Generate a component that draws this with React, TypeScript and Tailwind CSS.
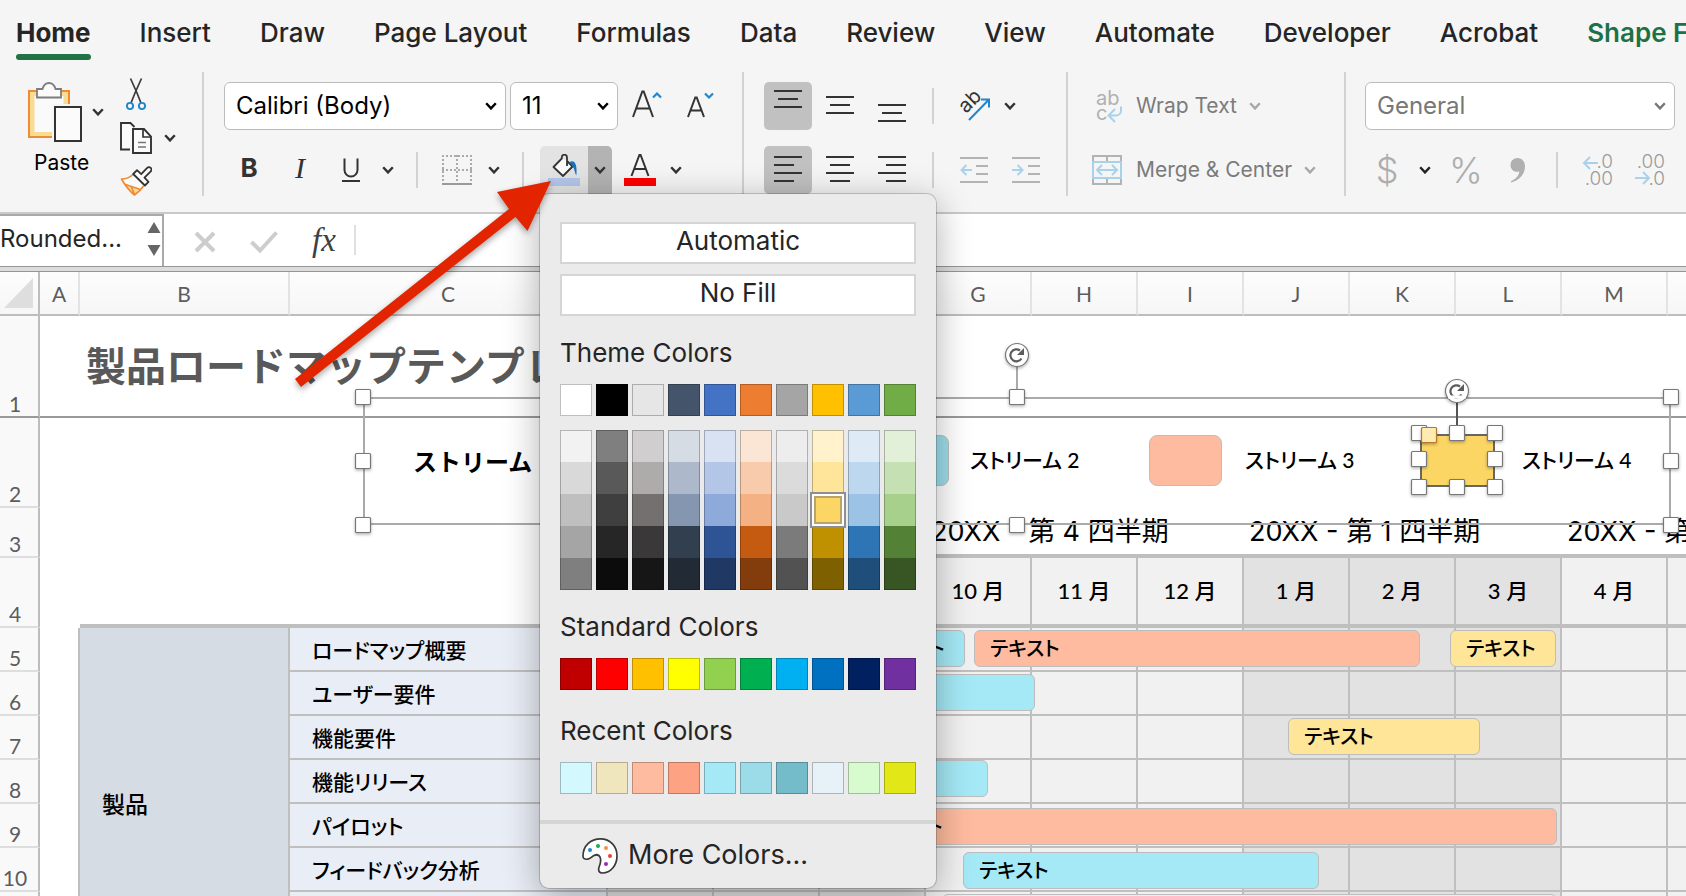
import React from "react";

const SANS = "font-['Inter','Noto_Sans_CJK_JP',sans-serif]";
const SHEET = "font-['Lato','Noto_Sans_CJK_JP',sans-serif]";

function Chevron({ className = "text-[#333]" }: { className?: string }) {
  return (
    <svg width="12" height="8" viewBox="0 0 12 8" fill="none" className={"shrink-0 " + className} aria-hidden="true">
      <path d="M1.2 1.2 6 6.4 10.8 1.2" stroke="currentColor" strokeWidth="2.4" />
    </svg>
  );
}

function Separator() {
  return <div className="h-[124px] w-0.5 shrink-0 bg-[#d2d2d2]" />;
}

function SmallSeparator({ className }: { className: string }) {
  return <div className={"h-9 w-0.5 shrink-0 bg-[#d2d2d2] " + className} />;
}

const tabs = ["Home", "Insert", "Draw", "Page Layout", "Formulas", "Data", "Review", "View", "Automate", "Developer", "Acrobat", "Shape Format"];

function Tabs() {
  return (
    <nav className="flex h-[68px] gap-[49px] overflow-hidden pl-4 text-[26px] leading-[30px] font-medium text-[#252525]">
      {tabs.map((t, i) => (
        <button
          key={t}
          type="button"
          className={
            "flex shrink-0 flex-col pt-[18px] whitespace-nowrap " +
            (i === 0 ? "font-bold" : i === tabs.length - 1 ? "font-semibold text-[#1e7145]" : "")
          }
        >
          {t}
          {i === 0 && <span className="mt-1.5 h-1.5 w-full rounded-full bg-[#217346]" />}
        </button>
      ))}
    </nav>
  );
}

function ClipboardGroup() {
  return (
    <div className="flex w-[202px] shrink-0 pt-1.5 pl-7">
      <button type="button" className="flex w-[92px] flex-col items-start pt-1">
        <span className="flex items-center gap-2.5">
          <svg width="54" height="60" viewBox="0 0 54 60" fill="none">
            <path d="M1 9H41V55H1z" fill="#f9dc93" />
            <path d="M6.500 14H35.500V50H6.500z" fill="#fafafa" />
            <path d="M24 22h20v37H24z" fill="#f6f6f6" />
            <path d="M24 55H1V9H41V22" stroke="#ee8b35" strokeWidth="2" />
            <path d="M9 15.500V7h5.500C15.500 3.500 18 1 21 1s5.500 2.500 6.500 6H33v8.500z" fill="#fafafa" stroke="#7d7d7d" strokeWidth="1.800" />
            <path d="M27 25h26v34H27z" fill="#fbfbfb" stroke="#333" strokeWidth="2" />
          </svg>
          <Chevron />
        </span>
        <span className="mt-[7px] pl-1.5 text-[21px] leading-7 text-black">Paste</span>
      </button>
      <div className="flex flex-col items-start gap-3">
        <button type="button" aria-label="Cut" className="pl-1.5">
          <svg width="20" height="32" viewBox="0 0 20 32" fill="none">
            <path d="M4.500 .5 10.800 14.500 15 25M15.500 .5 9.200 14.500 5 25" stroke="#3a3a3a" strokeWidth="1.700" />
            <circle cx="4" cy="28" r="3.100" stroke="#1f86d0" strokeWidth="1.900" />
            <circle cx="16" cy="28" r="3.100" stroke="#1f86d0" strokeWidth="1.900" />
          </svg>
        </button>
        <button type="button" aria-label="Copy" className="flex items-center gap-3">
          <svg width="32" height="32" viewBox="0 0 32 32" fill="none">
            <path d="M10 27.500H1V1h9.500l4 4" fill="#fafafa" stroke="#333" strokeWidth="1.900" />
            <path d="M13 7h11l7 7.500V31H13z" fill="#fbfbfb" stroke="#333" strokeWidth="1.900" />
            <path d="M23 7v8H31" stroke="#333" strokeWidth="1.700" />
            <path d="M18 20.500h8M18 25h8" stroke="#777" strokeWidth="1.600" />
          </svg>
          <Chevron />
        </button>
        <button type="button" aria-label="Format painter">
          <svg width="32" height="32" viewBox="0 0 32 32" fill="none">
            <path d="M1.500 13C6 13 10 11 13.200 7.500L25 19C22 22.500 19 26 14.500 29 9.500 25 5 19 1.500 13z" fill="#fbfbfb" />
            <path d="M6.500 19.500 20 23 14.500 28.500z" fill="#f9dc93" />
            <path d="M13 8.500C10 11.500 6 13 1.500 13 5 19 9.500 25 14.500 29 18 26.500 21 24 23.500 20M5.500 18.500 20.500 23.500M14.500 28.500 11.500 21" stroke="#ee8b35" strokeWidth="1.700" strokeLinejoin="round" />
            <path d="M13.200 8 17 4.200l4.200 4 6-6.400a2.400 2.400 0 0 1 3.500 3.500L24.500 11.700l4 4.100-3.600 3.700z" fill="#fbfbfb" stroke="#333" strokeWidth="1.800" strokeLinejoin="round" />
          </svg>
        </button>
      </div>
    </div>
  );
}

const THEME = ["#ffffff", "#000000", "#e7e6e6", "#44546a", "#4472c4", "#ed7d31", "#a5a5a5", "#ffc000", "#5b9bd5", "#70ad47"];
const TINTS = [
  ["#f2f2f2", "#d9d9d9", "#bfbfbf", "#a5a5a5", "#7f7f7f"],
  ["#7f7f7f", "#595959", "#3f3f3f", "#262626", "#0c0c0c"],
  ["#d0cece", "#aeabab", "#757070", "#3a3838", "#171616"],
  ["#d6dce4", "#adb9ca", "#8496b0", "#323f4f", "#222a35"],
  ["#d9e2f3", "#b4c6e7", "#8eaadb", "#2f5496", "#1f3864"],
  ["#fbe5d5", "#f7cbac", "#f4b183", "#c55a11", "#833c0b"],
  ["#ededed", "#dbdbdb", "#c9c9c9", "#7b7b7b", "#525252"],
  ["#fff2cc", "#fee599", "#fcd664", "#bf9000", "#7f6000"],
  ["#deebf6", "#bdd7ee", "#9cc3e5", "#2e75b5", "#1e4e79"],
  ["#e2efd9", "#c5e0b3", "#a8d08d", "#538135", "#375623"],
];
const STANDARD = ["#c00000", "#ff0000", "#ffc000", "#ffff00", "#92d050", "#00b050", "#00b0f0", "#0070c0", "#002060", "#7030a0"];
const RECENT = ["#d3f9fe", "#efe6bd", "#febb9f", "#fea284", "#a5e9f6", "#9cdce8", "#74bcc9", "#e6f1f8", "#d8facf", "#e2e817"];

function SwatchRow({ colors, label }: { colors: string[]; label: string }) {
  return (
    <div className="flex gap-1">
      {colors.map((c) => (
        <button key={c} type="button" aria-label={label + " " + c} className="size-8 border border-black/25" style={{ backgroundColor: c }} />
      ))}
    </div>
  );
}

function FillMenu() {
  const action = "block h-[42px] w-full border-2 border-[#d5d5d5] bg-white pb-1 text-center text-[26px] leading-8";
  const title = "mb-[15px] text-[26px] leading-8";
  return (
    <div className="absolute top-12 left-0 z-20 w-[396px] rounded-[9px] bg-[#ebebeb] text-[#252525] shadow-[0_0_0_1px_rgba(0,0,0,0.18),0_8px_36px_rgba(0,0,0,0.32)]">
      <div className="px-5 pt-7">
        <button type="button" className={action}>Automatic</button>
        <button type="button" className={action + " mt-2.5"}>No Fill</button>
        <h2 className={title + " mt-[21px]"}>Theme Colors</h2>
        <SwatchRow colors={THEME} label="Theme" />
        <div className="mt-3.5 flex gap-1">
          {TINTS.map((col, ci) => (
            <div key={ci} className="relative flex flex-col">
              {col.map((c, ri) => (
                <button
                  key={ri}
                  type="button"
                  aria-label={"Tint " + c}
                  className={"relative size-8 border-x border-black/25 " + (ri === 0 ? "border-t" : ri === 4 ? "border-b" : "")}
                  style={{ backgroundColor: c }}
                >
                  {ci === 7 && ri === 2 && (
                    <span className="absolute -inset-x-[3px] -inset-y-0.5 z-10 border-2 border-[#8f8f8f] bg-white p-0.5">
                      <span className="block size-full border-2 border-[#b9a36b] bg-[#fcd664]" />
                    </span>
                  )}
                </button>
              ))}
            </div>
          ))}
        </div>
        <h2 className={title + " mt-[21px]"}>Standard Colors</h2>
        <SwatchRow colors={STANDARD} label="Standard" />
        <h2 className={title + " mt-[25px]"}>Recent Colors</h2>
        <SwatchRow colors={RECENT} label="Recent" />
      </div>
      <hr className="mt-[26px] h-1 border-0 bg-[#d5d5d5]" />
      <button type="button" className="flex h-16 w-full items-center gap-2.5 pb-px pl-[42px] text-[27px]">
        <svg width="36" height="36" viewBox="0 0 36 36" fill="none">
          <path d="M1 18C1 8 8.500 .9 18.500 .9S35 8.500 35 18c0 9.500-6.500 17-14.500 17-4 0-4.500-3.500-3.300-6.500C18.500 25.500 19.300 22 18 19c-1-2-3.500-2.700-6-1.500C10 18.500 8.500 21 5.500 21.200 2.500 21.400 1 20.500 1 18z" fill="#fff" stroke="#3a3a3a" strokeWidth="1.700" />
          <circle cx="8" cy="12" r="2" fill="#1f86d0" />
          <circle cx="16" cy="8" r="2" fill="#1ea84c" />
          <circle cx="24" cy="10" r="2" fill="#f2903c" />
          <circle cx="28" cy="18" r="2" fill="#e8432e" />
          <circle cx="24" cy="26" r="2" fill="#9431a8" />
        </svg>
        More Colors...
      </button>
    </div>
  );
}

function ComboBox({ label, value, className, chevron }: { label: string; value: string; className: string; chevron: string }) {
  return (
    <label className={"relative flex h-12 shrink-0 items-center rounded-md border border-[#bcbcbc] bg-white " + className}>
      <select aria-label={label} defaultValue={value} className="h-full w-full appearance-none bg-transparent pl-[11px] outline-none">
        <option>{value}</option>
      </select>
      <span className={"pointer-events-none absolute " + chevron}>
        <Chevron className="" />
      </span>
    </label>
  );
}

function FontGroup() {
  return (
    <div className="flex w-[538px] shrink-0 flex-col gap-4 pt-2.5 pl-5">
      <div className="flex h-12 items-center">
        <ComboBox label="Font" value="Calibri (Body)" className="w-[282px] text-[24px] text-black" chevron="right-2" />
        <ComboBox label="Font size" value="11" className="ml-1 w-[108px] text-[24px] text-black" chevron="right-2" />
        <button type="button" aria-label="Increase font size" className="ml-3.5">
          <svg width="32" height="34" viewBox="0 0 32 34" fill="none">
            <path d="M1 28 10.300 2.500h1.400L21 28M4.500 19.500h13" stroke="#333" strokeWidth="2" />
            <path d="m21 8.500 4-4 4 4" stroke="#1f86d0" strokeWidth="2.200" />
          </svg>
        </button>
        <button type="button" aria-label="Decrease font size" className="ml-[23px]">
          <svg width="30" height="34" viewBox="0 0 30 34" fill="none">
            <path d="M1 28 8.300 8.500h1.400L17 28M4 21.500h10" stroke="#333" strokeWidth="2" />
            <path d="m18 4.500 4 4 4-4" stroke="#1f86d0" strokeWidth="2.200" />
          </svg>
        </button>
      </div>
      <div className="flex h-12 items-center text-[#333]">
        <div className="flex gap-px pb-1">
          <button type="button" aria-label="Bold" className="w-[50px] text-[26px] leading-9 font-bold">B</button>
          <button type="button" aria-label="Italic" className="w-[50px] font-['Liberation_Serif',serif] text-[30px] leading-9 italic">I</button>
          <button type="button" aria-label="Underline" className="flex w-[50px] justify-center text-[26px] leading-9">
            <svg width="18" height="36" viewBox="0 0 18 36" fill="none">
              <path d="M2.500 8.500V20a6.500 6.500 0 0 0 13 0V8.500" stroke="#333" strokeWidth="2" />
              <path d="M0 31h18" stroke="#333" strokeWidth="2" />
            </svg>
          </button>
        </div>
        <span className="ml-1.5"><Chevron /></span>
        <SmallSeparator className="ml-[22px]" />
        <button type="button" aria-label="Borders" className="ml-6 flex items-center gap-4">
          <svg width="30" height="30" viewBox="0 0 30 30" fill="none">
            <path d="M0 1h30M0 15h30M1 0v28M15 0v28M29 0v28" stroke="#ababab" strokeWidth="2" strokeDasharray="2 2" />
            <path d="M0 29h30" stroke="#9a9a9a" strokeWidth="2" />
          </svg>
          <Chevron />
        </button>
        <SmallSeparator className="ml-[22px]" />
        <div className="relative ml-4 flex h-12 overflow-visible">
          <button type="button" aria-label="Fill color" className="flex h-12 w-12 flex-col items-center rounded-tl-[5px] bg-[#e3e3e3] pt-2">
            <svg width="26" height="24" viewBox="0 0 26 24" fill="none">
              <path d="M2.500 13 10.500 4.500 15.500 6 21.500 12.500 12 22z" fill="#fbfbfb" />
              <path d="M16.500 7.500 21.500 12.500 12 22 2.500 13 10.800 4.500V3.300a2.600 2.600 0 0 1 5.200 0V12" stroke="#333" strokeWidth="1.800" strokeLinejoin="round" />
              <path d="M18.500 8c5-2.500 8 2 6.800 13.500-1.600-2.500-1.300-6-3.600-9z" fill="#1673c2" />
            </svg>
            <span className="h-2 w-8 bg-[#b4c6ea]" />
          </button>
          <button type="button" aria-label="Fill color options" className="flex h-12 w-6 items-center justify-center rounded-tr-[5px] bg-[#b3b3b3]">
            <Chevron />
          </button>
          <FillMenu />
        </div>
        <button type="button" aria-label="Font color" className="ml-3 flex h-12 w-8 flex-col items-center pt-2">
          <svg width="20" height="24" viewBox="0 0 20 24" fill="none">
            <path d="M1.500 22 9.400 1h1.200L18.500 22M4.500 15h11" stroke="#333" strokeWidth="2" />
          </svg>
          <span className="h-2 w-8 bg-[#fe0000]" />
        </button>
        <span className="ml-3.5"><Chevron /></span>
      </div>
    </div>
  );
}

function AlignButton({ label, d, active }: { label: string; d: string; active?: boolean }) {
  return (
    <button type="button" aria-label={label} aria-pressed={!!active} className={"size-12 rounded-[5px] " + (active ? "bg-[#c1c1c1]" : "")}>
      <svg width="48" height="48" viewBox="0 0 48 48" fill="none">
        <path d={d} stroke="#333" strokeWidth="2" />
      </svg>
    </button>
  );
}

function AlignmentGroup() {
  return (
    <div className="flex w-[322px] shrink-0 flex-col gap-4 pt-2.5 pl-5">
      <div className="flex h-12 items-center">
        <div className="flex gap-1">
          <AlignButton active label="Top align" d="M10 9h28M14 17h20M10 25h28" />
          <AlignButton label="Middle align" d="M10 15h28M14 23h20M10 31h28" />
          <AlignButton label="Bottom align" d="M10 23h28M14 31h20M10 39h28" />
        </div>
        <SmallSeparator className="ml-4" />
        <button type="button" aria-label="Orientation" className="ml-6 flex items-center gap-3.5">
          <svg width="32" height="32" viewBox="0 0 32 32" fill="none">
            <text x="0" y="0" transform="translate(8 24) rotate(-45)" fontSize="20" fill="#333">ab</text>
            <path d="M11 30 30.500 10M23 9.500h8v8" stroke="#1f86d0" strokeWidth="2" />
          </svg>
          <Chevron />
        </button>
      </div>
      <div className="flex h-12 items-center">
        <div className="flex gap-1">
          <AlignButton active label="Align left" d="M10 11h28M10 19h20M10 27h28M10 35h20" />
          <AlignButton label="Center" d="M10 11h28M14 19h20M10 27h28M14 35h20" />
          <AlignButton label="Align right" d="M10 11h28M18 19h20M10 27h28M18 35h20" />
        </div>
        <SmallSeparator className="ml-4" />
        <button type="button" aria-label="Decrease indent" className="ml-[26px]">
          <svg width="28" height="28" viewBox="0 0 28 28" fill="none">
            <path d="M0 2h28M16 10h12M16 18h12M0 26h28" stroke="#b3b3b3" strokeWidth="2" />
            <path d="M12 14H1.500M6.500 9l-5 5 5 5" stroke="#a9d2ea" strokeWidth="2" />
          </svg>
        </button>
        <button type="button" aria-label="Increase indent" className="ml-6">
          <svg width="28" height="28" viewBox="0 0 28 28" fill="none">
            <path d="M0 2h28M16 10h12M16 18h12M0 26h28" stroke="#b3b3b3" strokeWidth="2" />
            <path d="M0 14h10.500M5.500 9l5 5-5 5" stroke="#a9d2ea" strokeWidth="2" />
          </svg>
        </button>
      </div>
    </div>
  );
}

function WrapGroup() {
  return (
    <div className="flex w-[276px] shrink-0 flex-col gap-4 pt-2.5 pl-6 text-[21px] text-[#7b7b7b]">
      <button type="button" className="flex h-12 items-center">
        <svg width="30" height="34" viewBox="0 0 30 34" fill="none" className="mr-3.5">
          <text x="4" y="16" fontSize="20" fill="#b0b0b0">ab</text>
          <text x="4" y="31" fontSize="20" fill="#b0b0b0">c</text>
          <path d="M29 17.500V21.500a5 5 0 0 1-5 5H17M23 20l-6.500 6.500 6.500 6.500" stroke="#a9d2ea" strokeWidth="2" />
        </svg>
        <span className="mr-3">Wrap Text</span>
        <Chevron className="text-[#a8a8a8]" />
      </button>
      <button type="button" className="flex h-12 items-center">
        <svg width="30" height="30" viewBox="0 0 30 30" fill="none" className="mr-3.5">
          <path d="M1 7V1h28v6M1 23v6h28v-6M15 1v6M15 23v6" stroke="#b3b3b3" strokeWidth="2" />
          <path d="M1 7h28v16H1z" stroke="#a9d2ea" strokeWidth="2" />
          <path d="M5 15h20M10 10l-5 5 5 5M20 10l5 5-5 5" stroke="#a9d2ea" strokeWidth="2" />
        </svg>
        <span className="mr-3">Merge &amp; Center</span>
        <Chevron className="text-[#a8a8a8]" />
      </button>
    </div>
  );
}

function NumberGroup() {
  return (
    <div className="flex min-w-0 flex-1 flex-col gap-4 pt-2.5 pr-[11px] pl-[19px]">
      <ComboBox label="Number format" value="General" className="text-[24px] text-[#777]" chevron="right-2" />
      <div className="flex h-12 items-center text-[36px] font-light text-[#adadad]">
        <button type="button" aria-label="Currency" className="ml-2.5 w-6">$</button>
        <span className="ml-5"><Chevron className="text-[#222]" /></span>
        <button type="button" aria-label="Percent" className="ml-[18px] w-8">%</button>
        <button type="button" aria-label="Comma style" className="ml-[29px]">
          <svg width="16" height="26" viewBox="0 0 16 26">
            <path d="M7.500 1C12 1 15 4.500 15 9.500 15 17 9.500 23.500 1 25.500v-1.200c5-2.300 8-6 8.300-9.800-5 1.500-8.800-2-8.800-6.500C.5 4 3.500 1 7.500 1z" fill="#b0b0b0" />
          </svg>
        </button>
        <SmallSeparator className="ml-[30px]" />
        <button type="button" aria-label="Increase decimal" className="ml-6">
          <svg width="32" height="34" viewBox="0 0 32 34" fill="none">
            <text x="31" y="15" textAnchor="end" fontSize="19" fontWeight="300" fill="#9c9c9c">.0</text>
            <text x="31" y="32" textAnchor="end" fontSize="19" fontWeight="300" fill="#9c9c9c">.00</text>
            <path d="M16 10H2M8 4 2 10l6 6" stroke="#a9d2ea" strokeWidth="2" />
          </svg>
        </button>
        <button type="button" aria-label="Decrease decimal" className="ml-5">
          <svg width="32" height="34" viewBox="0 0 32 34" fill="none">
            <text x="31" y="15" textAnchor="end" fontSize="19" fontWeight="300" fill="#9c9c9c">.00</text>
            <text x="31" y="32" textAnchor="end" fontSize="19" fontWeight="300" fill="#9c9c9c">.0</text>
            <path d="M1 25h14M9 19l6 6-6 6" stroke="#a9d2ea" strokeWidth="2" />
          </svg>
        </button>
      </div>
    </div>
  );
}

function FormulaBar() {
  return (
    <div className="flex h-[52px] shrink-0 items-center bg-white">
      <div className="flex h-full w-[164px] shrink-0 items-center border-t-2 border-r-2 border-[#a9a9a9] pr-px pb-1">
        <input aria-label="Name box" defaultValue="Rounded..." className="min-w-0 flex-1 bg-transparent text-[24px] text-[#252525] outline-none" />
        <svg width="14" height="34" viewBox="0 0 14 34" aria-hidden="true">
          <path d="M7 0l6.500 11H.5zM7 34l6.500-11H.5z" fill="#666" />
        </svg>
      </div>
      <button type="button" aria-label="Cancel" className="mt-1 ml-[30px]">
        <svg width="22" height="22" viewBox="0 0 22 22" fill="none">
          <path d="M2 2l18 18M20 2 2 20" stroke="#cdcdcd" strokeWidth="4" />
        </svg>
      </button>
      <button type="button" aria-label="Enter" className="mt-1 ml-[34px]">
        <svg width="28" height="22" viewBox="0 0 28 22" fill="none">
          <path d="M1.500 11 10 19.500 26.500 1.500" stroke="#cdcdcd" strokeWidth="4" />
        </svg>
      </button>
      <button type="button" aria-label="Insert function" className="ml-[34px] font-['Liberation_Serif',serif] text-[33px] leading-9 text-[#3f3f3f] italic">
        fx
      </button>
      <div className="ml-[18px] h-[30px] w-0.5 bg-[#e0e0e0]" />
      <input aria-label="Formula" className="min-w-0 flex-1 bg-transparent px-2 text-[24px] outline-none" />
    </div>
  );
}

const letters = ["A", "B", "C", "D", "E", "F", "G", "H", "I", "J", "K", "L", "M", "N"];
const months = ["7 月", "8 月", "9 月", "10 月", "11 月", "12 月", "1 月", "2 月", "3 月", "4 月", "5 月"];
const tasks = ["ロードマップ概要", "ユーザー要件", "機能要件", "機能リリース", "パイロット", "フィードバック分析", "", ""];
const isShaded = (i: number) => i < 3 || (i > 5 && i < 9);

function RowHeader({ n, tall }: { n: number; tall?: boolean }) {
  return (
    <th
      scope="row"
      className={
        "border-r-2 border-b-2 border-r-[#bdbdbd] bg-[#f9f9f9] pr-2 text-center align-bottom text-[21px] leading-6 font-normal text-[#5c5c5c] " +
        (tall ? "border-b-[#999]" : "border-b-[#dedede]")
      }
    >
      {n}
    </th>
  );
}

function Sheet() {
  return (
    <table className="w-[1774px] table-fixed border-separate border-spacing-0">
      <colgroup>
        <col className="w-10" />
        <col className="w-10" />
        <col className="w-[210px]" />
        <col className="w-[318px]" />
        {months.map((m) => (
          <col key={m} className="w-[106px]" />
        ))}
      </colgroup>
      <thead>
        <tr className="h-11 bg-linear-to-b from-[#fdfdfd] to-[#f6f6f6]">
          <th className="border-r-2 border-b-2 border-[#bdbdbd]" aria-label="Select all">
            <svg width="30" height="30" viewBox="0 0 30 30" className="ml-1" aria-hidden="true">
              <path d="M29 0v30H0z" fill="#dedede" />
            </svg>
          </th>
          {letters.map((l) => (
            <th key={l} scope="col" className="border-r-2 border-b-2 border-r-[#e3e3e3] border-b-[#bdbdbd] pt-0.5 text-[21px] leading-7 font-normal text-[#5c5c5c]">
              {l}
            </th>
          ))}
        </tr>
      </thead>
      <tbody>
        <tr className="h-[102px]">
          <RowHeader n={1} tall />
          <td className="border-b-2 border-[#999]" />
          <td colSpan={13} className="border-b-2 border-[#999] pl-1.5 text-[40px] leading-[60px] font-bold whitespace-nowrap text-[#595959]">
            製品ロードマップテンプレート
          </td>
        </tr>
        <tr className="h-[90px]">
          <RowHeader n={2} />
          <td colSpan={14} />
        </tr>
        <tr className="h-[50px]">
          <RowHeader n={3} />
          <td colSpan={3} />
          <td colSpan={3} className="border-b-4 border-[#bfbfbf]" />
          {["20XX - 第 4 四半期", "20XX - 第 1 四半期", "20XX - 第 2 四半期"].map((q, i) => (
            <td
              key={q}
              colSpan={i === 2 ? 2 : 3}
              className="overflow-hidden border-b-4 border-[#bfbfbf] pt-0.5 pl-[5px] font-['Inter','Noto_Sans_CJK_JP',sans-serif] text-[27px] leading-8 whitespace-nowrap text-black"
            >
              {q}
            </td>
          ))}
        </tr>
        <tr className="h-[70px]">
          <RowHeader n={4} />
          <td />
          <td className="border-b-4 border-[#bfbfbf]" />
          <td className="border-b-4 border-[#bfbfbf]" />
          {months.map((m, i) => (
            <td
              key={m}
              className={
                "border-r-2 border-b-4 border-[#bfbfbf] text-center text-[22px] leading-8 font-medium text-black " +
                (isShaded(i) ? "bg-[#e2e2e2]" : "bg-[#f1f1f1]")
              }
            >
              {m}
            </td>
          ))}
        </tr>
        {tasks.map((t, r) => (
          <tr key={r} className="h-11">
            <RowHeader n={r + 5} />
            <td className="border-r-2 border-[#bfbfbf]" />
            {r === 0 && (
              <td rowSpan={8} className="border-r-2 border-[#bfbfbf] bg-[#d6dce4] pl-[22px] text-[23px] font-medium text-black">
                製品
              </td>
            )}
            <td className="border-r-2 border-b-2 border-[#bfbfbf] bg-[#e9edf5] pt-0.5 pl-[22px] text-[21px] leading-8 font-medium text-black [font-feature-settings:'palt']">
              {t}
            </td>
            {months.map((m, i) => (
              <td key={m} className={"border-r-2 border-b-2 border-[#bfbfbf] " + (isShaded(i) ? "bg-[#e2e2e2]" : "bg-[#f1f1f1]")} />
            ))}
          </tr>
        ))}
      </tbody>
    </table>
  );
}

type Bar = { x: number; y: number; w: number; color: string; text?: boolean };
const CYAN = "#a5e9f6";
const ORANGE = "#febb9f";
const YELLOW = "#fee597";
const bars: Bar[] = [
  { x: 859, y: 358, w: 106, color: CYAN, text: true },
  { x: 974, y: 358, w: 446, color: ORANGE, text: true },
  { x: 1450, y: 358, w: 106, color: YELLOW, text: true },
  { x: 840, y: 402, w: 195, color: CYAN },
  { x: 1288, y: 446, w: 192, color: YELLOW, text: true },
  { x: 840, y: 488, w: 148, color: CYAN },
  { x: 857, y: 536, w: 700, color: ORANGE, text: true },
  { x: 963, y: 580, w: 356, color: CYAN, text: true },
  { x: 942, y: 622, w: 615, color: "#d3f9fe" },
];

const legends = [
  { text: "ストリーム 2", x: 970 },
  { text: "ストリーム 3", x: 1245 },
  { text: "ストリーム 4", x: 1522 },
];

function Handle({ x, y, accent }: { x: number; y: number; accent?: boolean }) {
  return (
    <rect
      x={x - 7.5}
      y={y - 7.5}
      width="15"
      height="15"
      rx="1"
      fill={accent ? "#ffeab0" : "#fff"}
      stroke={accent ? "#b5762f" : "#777"}
      strokeWidth="1.200"
      filter="url(#soft)"
    />
  );
}

function Rotator({ x, y }: { x: number; y: number }) {
  return (
    <g>
      <circle cx={x} cy={y} r="11.500" fill="#fff" stroke="#777" strokeWidth="1.200" filter="url(#soft)" />
      <path d={`M${x + 4.5} ${y + 3.5}A6 6 0 1 1 ${x + 3} ${y - 4.500}`} fill="none" stroke="#5c5c5c" strokeWidth="2.200" />
      <path d={`M${x + 7} ${y - 7}v7h-7z`} fill="#5c5c5c" />
    </g>
  );
}

function Shapes() {
  return (
    <>
      {bars.map((b, i) => (
        <div
          key={i}
          className="absolute flex h-[37px] items-center rounded-md border border-[#bdbdbd] pb-0.5 pl-[15px] text-[20px] font-medium text-black [font-feature-settings:'palt']"
          style={{ left: b.x, top: b.y, width: b.w, backgroundColor: b.color }}
        >
          {b.text && "テキスト"}
        </div>
      ))}
      <div className="absolute top-[170px] left-[413px] text-[24px] leading-10 font-bold text-black">ストリーム</div>
      <div className="absolute top-[163px] left-[876px] h-[51px] w-[73px] rounded-lg border border-[#bdbdbd] bg-[#9ddfec]" />
      <div className="absolute top-[163px] left-[1149px] h-[51px] w-[73px] rounded-lg border border-[#bdbdbd] bg-[#febb9f]" />
      <div className="absolute top-[162px] left-[1420px] h-[53px] w-[75px] border-2 border-[#666] bg-[#fcd664]" />
      {legends.map((l) => (
        <div key={l.text} className="absolute top-[168px] text-[21px] leading-10 font-medium text-black [font-feature-settings:'palt']" style={{ left: l.x }}>
          {l.text}
        </div>
      ))}
      <svg className="absolute top-0 left-0" width="1686" height="624" viewBox="0 0 1686 624" aria-hidden="true">
        <defs>
          <filter id="soft" x="-40%" y="-40%" width="180%" height="200%">
            <feDropShadow dx="0" dy="1.500" stdDeviation="1.500" floodColor="#000" floodOpacity="0.3" />
          </filter>
        </defs>
        <path d="M364 126H1670V252H364z" fill="none" stroke="#aaa" strokeWidth="2" />
        <path d="M1017 90v35" stroke="#aaa" strokeWidth="2" />
        <path d="M1457 125v35" stroke="#555" strokeWidth="2" />
        <Rotator x={1017} y={83} />
        <Rotator x={1457} y={119} />
        <path d="M1448 125h18" stroke="#fff" strokeWidth="3" />
        {[125, 189, 253].map((y) => [363, 1017, 1671].map((x) => (x === 1017 && y === 189 ? null : <Handle key={x + "-" + y} x={x} y={y} />)))}
        {[161, 187, 215].map((y) => [1419, 1457, 1495].map((x) => (x === 1457 && y === 187 ? null : <Handle key={x + "-" + y} x={x} y={y} />)))}
        <Handle x={1429} y={163} accent />
      </svg>
    </>
  );
}

export default function App() {
  return (
    <main className={"relative flex h-screen flex-col overflow-hidden bg-white " + SANS}>
      <header className="shrink-0 border-b-2 border-[#c9c9c9] bg-[#f5f5f5]">
        <Tabs />
        <div className="flex h-36 pt-1">
          <ClipboardGroup />
          <Separator />
          <FontGroup />
          <Separator />
          <AlignmentGroup />
          <Separator />
          <WrapGroup />
          <Separator />
          <NumberGroup />
        </div>
      </header>
      <FormulaBar />
      <div className="h-1.5 shrink-0 border-y border-[#969696] bg-[#dcdcdc]" />
      <section className={"relative min-h-0 flex-1 overflow-hidden " + SHEET}>
        <Sheet />
        <Shapes />
      </section>
      <svg className="pointer-events-none absolute top-[170px] left-[285px] z-30 drop-shadow-[0_3px_3px_rgba(0,0,0,0.35)]" width="280" height="230" viewBox="285 170 280 230" aria-hidden="true">
        <path d="M551 181 527.500 231 515.500 217 301 387 295 379 509 209 497 192z" fill="#e32400" />
      </svg>
    </main>
  );
}
